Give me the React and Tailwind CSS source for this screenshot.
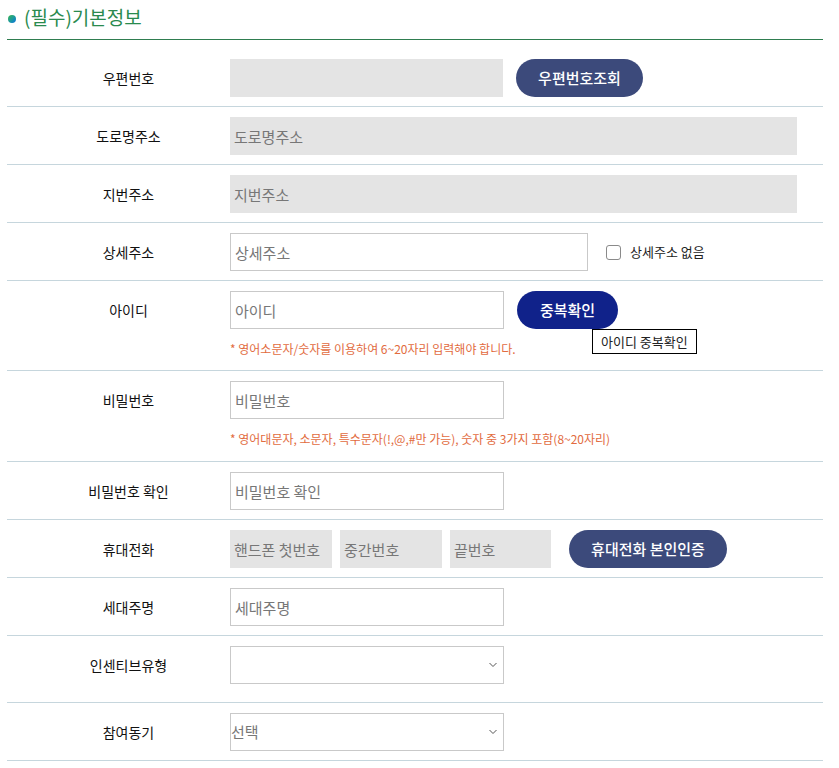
import React from "react";

const font = { fontFamily: '"Noto Sans CJK KR", "Noto Sans", sans-serif' };

function Row({ label, children, className = "pt-[10px] pb-[9px]" }) {
  return (
    <div className={`flex border-b border-[#c6d6dd] ${className}`}>
      <div className="w-[223px] pl-5 shrink-0 h-[38px] flex items-center justify-center text-[14px] font-normal text-[#111]">
        {label}
      </div>
      <div className="flex-1 min-w-0">{children}</div>
    </div>
  );
}

function GreyInput({ className = "", placeholder = "" }) {
  return (
    <input
      readOnly
      placeholder={placeholder}
      className={`h-[38px] bg-[#e4e4e4] px-1 text-[15px] placeholder-[#777] outline-none ${className}`}
    />
  );
}

function TextInput({ className = "w-[274px]", placeholder = "" }) {
  return (
    <input
      placeholder={placeholder}
      className={`h-[38px] border border-[#c9c9c9] bg-white px-1 text-[15px] placeholder-[#777] outline-none ${className}`}
    />
  );
}

function Btn({ children, className = "" }) {
  return (
    <button className={`h-[38px] rounded-full text-white text-[15px] font-medium flex items-center justify-center ${className}`}>
      {children}
    </button>
  );
}

function Select({ children }) {
  return (
    <div className="relative w-[274px] h-[38px]">
      <select className="w-full h-full border border-[#c9c9c9] bg-white px-0 text-[15px] text-[#777] outline-none appearance-none">
        {children}
      </select>
      <svg className="absolute right-[7px] top-[16px] w-[8px] h-[6px] pointer-events-none" viewBox="0 0 8 6" fill="none" stroke="#555" strokeWidth="1">
        <path d="M0.5 1l3.5 3.5L7.5 1" />
      </svg>
    </div>
  );
}

function Hint({ children }) {
  return <p className="mt-[12px] text-[12px] leading-[16px] text-[#e26b40]">{children}</p>;
}

export default function App() {
  return (
    <div className="bg-white min-h-[768px]" style={font}>
      <div className="ml-[7px] w-[816px]">
        {/* Title */}
        <div className="h-[40px] flex items-center gap-[8px] pb-[4px] border-b border-[#2f7d50]">
          <span className="w-[8px] h-[8px] rounded-full bg-gradient-to-br from-[#3cb43c] via-[#1e9a9a] to-[#1d6fe0] ml-[1px] mt-[3px]" />
          <h2 className="text-[19px] text-[#2a8a4e]">(필수)기본정보</h2>
        </div>

        <Row label="우편번호" className="pt-[19px] pb-[9px]">
          <div className="flex items-center gap-[13px]">
            <GreyInput className="w-[273px]" />
            <Btn className="w-[127px] bg-[#3c4a7b]">우편번호조회</Btn>
          </div>
        </Row>

        <Row label="도로명주소">
          <GreyInput className="w-[567px]" placeholder="도로명주소" />
        </Row>

        <Row label="지번주소">
          <GreyInput className="w-[567px]" placeholder="지번주소" />
        </Row>

        <Row label="상세주소">
          <div className="flex items-center gap-[18px]">
            <TextInput className="w-[358px]" placeholder="상세주소" />
            <label className="flex items-center gap-[9px] text-[13px] text-[#222]">
              <span className="w-[15px] h-[15px] rounded-[3px] border border-[#8a8a8a] bg-white" />
              상세주소 없음
            </label>
          </div>
        </Row>

        <Row label="아이디" className="pt-[10px] pb-[13px]">
          <div className="flex items-center gap-[13px]">
            <TextInput placeholder="아이디" />
            <div className="relative">
              <Btn className="w-[101px] bg-[#10228a]">중복확인</Btn>
              <div className="absolute left-[75px] top-[38px] whitespace-nowrap border border-black bg-white px-[8px] h-[25px] flex items-center text-[13px] text-[#222]">
                아이디 중복확인
              </div>
            </div>
          </div>
          <Hint>* 영어소문자/숫자를 이용하여 6~20자리 입력해야 합니다.</Hint>
        </Row>

        <Row label="비밀번호" className="pt-[10px] pb-[14px]">
          <TextInput placeholder="비밀번호" />
          <Hint>* 영어대문자, 소문자, 특수문자(!,@,#만 가능), 숫자 중 3가지 포함(8~20자리)</Hint>
        </Row>

        <Row label="비밀번호 확인">
          <TextInput placeholder="비밀번호 확인" />
        </Row>

        <Row label="휴대전화">
          <div className="flex items-center">
            <GreyInput className="w-[102px]" placeholder="핸드폰 첫번호" />
            <GreyInput className="w-[102px] ml-[8px]" placeholder="중간번호" />
            <GreyInput className="w-[101px] ml-[8px]" placeholder="끝번호" />
            <Btn className="w-[158px] ml-[18px] bg-[#3c4a7b]">휴대전화 본인인증</Btn>
          </div>
        </Row>

        <Row label="세대주명">
          <TextInput placeholder="세대주명" />
        </Row>

        <Row label="인센티브유형" className="pt-[10px] pb-[18px]">
          <Select>
            <option value=""></option>
          </Select>
        </Row>

        <Row label="참여동기">
          <Select>
            <option value="">선택</option>
          </Select>
        </Row>
      </div>
    </div>
  );
}
